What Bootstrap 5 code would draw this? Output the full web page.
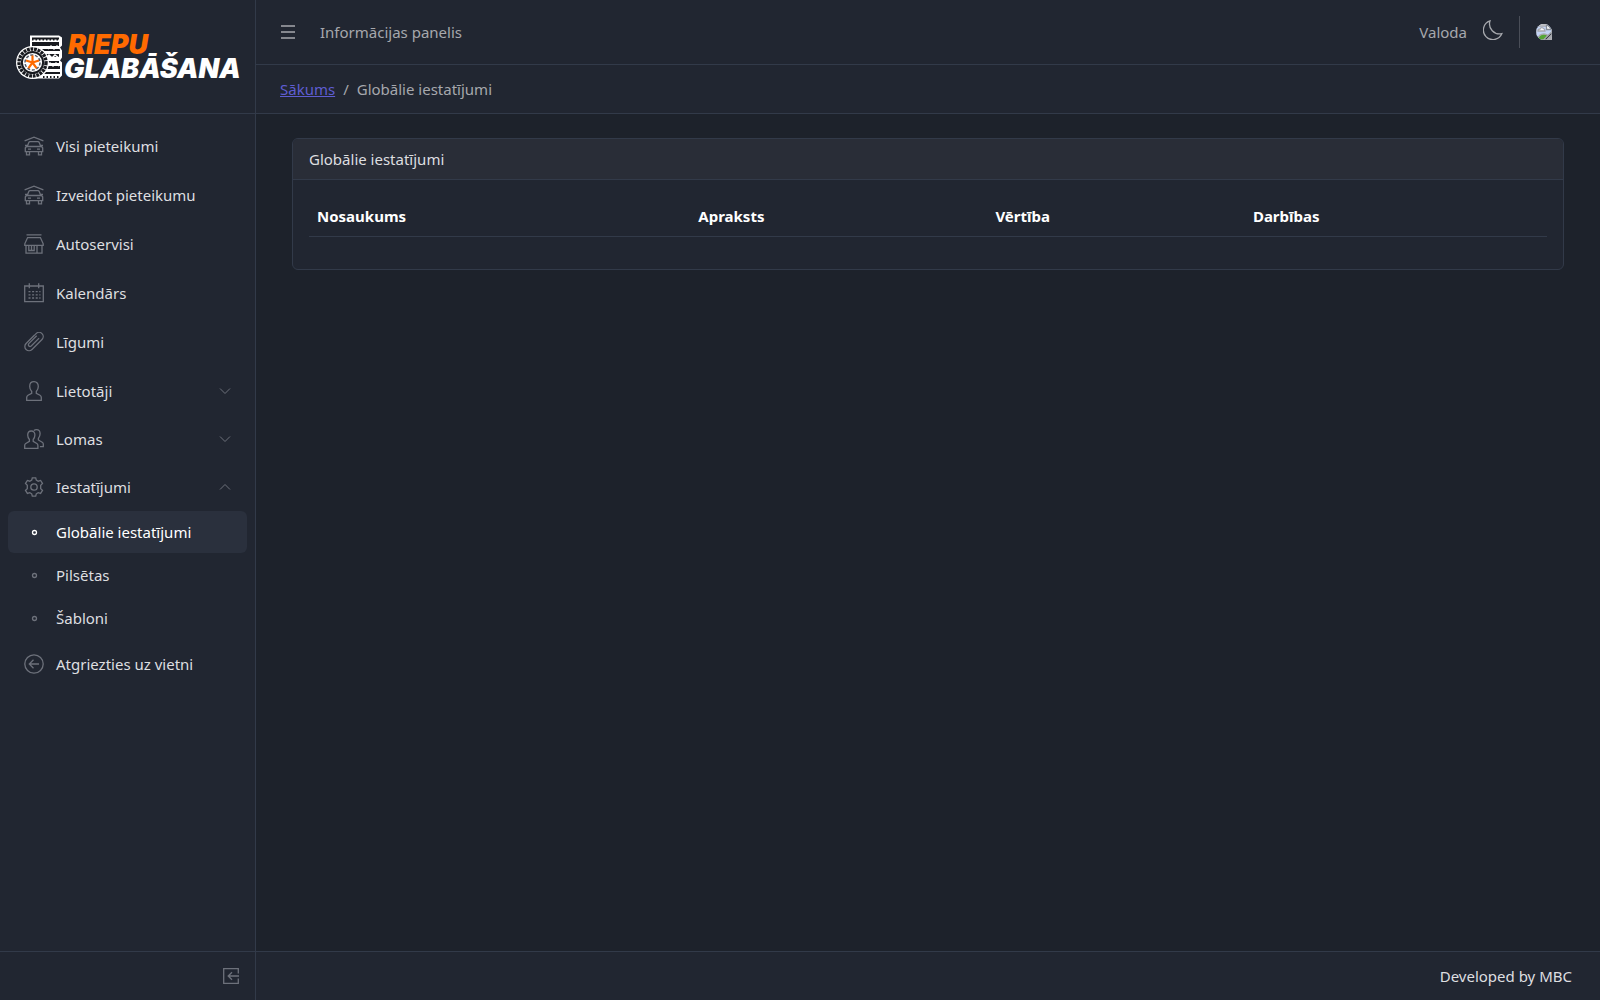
<!DOCTYPE html>
<html lang="lv" data-bs-theme="dark">
<head>
<meta charset="utf-8">
<meta name="viewport" content="width=device-width, initial-scale=1">
<title>Globālie iestatījumi</title>
<link href="https://cdn.jsdelivr.net/npm/bootstrap@5.3.0/dist/css/bootstrap.min.css" rel="stylesheet">
<style>
  :root { --panel: #212631; --line: #323a49; --dim: #6d717b; --soft: #a6a8ad; }
  body { background: #1d222b; color: #dedfe0; font-family: "Noto Sans", "Open Sans", sans-serif; font-size: 15px; line-height: 24px; }
  svg { display: block; fill: none; stroke: currentColor; flex: none; }
  .app-side { width: 256px; flex: none; background: var(--panel); border-right: 1px solid var(--line); }
  .brand { height: 114px; padding: 0 0 0 16px; border-bottom: 1px solid var(--line); color: #fff; }
  .brand-text { font: italic 900 27px/24px Inter, sans-serif; padding: 1px 0 0 2px; }
  .brand-text .top { color: #ff6a00; }
  .side-nav { padding: 8px; }
  .side-nav a, .side-nav button { display: flex; align-items: center; width: 100%; height: 48px; padding: 0 16px; gap: 12px; border: 0; border-radius: 6px; background: none; color: #dedfe0; text-decoration: none; text-align: left; }
  .side-nav svg, .side-foot { color: var(--dim); stroke-width: 1.3; }
  .side-nav > li.flat { margin-bottom: 1px; }
  .side-nav .sub a { height: 42px; margin-bottom: 1px; }
  .side-nav .sub a.active { background: #2a303d; color: #fff; }
  .side-nav .sub a.active svg { color: #fff; }
  .side-foot { height: 49px; padding: 0 16px; border-top: 1px solid var(--line); }
  .top-bar, .crumb-bar { background: var(--panel); border-bottom: 1px solid var(--line); padding: 0 24px; color: var(--soft); }
  .top-bar { height: 65px; }
  .top-bar a, .plain { color: inherit; text-decoration: none; background: none; border: 0; padding: 0; }
  .top-bar svg { stroke-width: 1.3; }
  .crumb-bar { height: 49px; }
  .crumb-bar .breadcrumb { --bs-breadcrumb-divider-color: #a6a8ad; --bs-breadcrumb-item-active-color: #a6a8ad; }
  .crumb-bar a { color: #5f5dd2; }
  .split { width: 1px; height: 32px; background: #4a4e58; }
  .page { padding: 24px 36px; }
  .card { --bs-card-bg: #212631; --bs-card-border-color: #323a49; --bs-card-cap-bg: #292d37; --bs-card-cap-padding-y: 8px; color: #dedfe0; }
  .table { --bs-table-bg: transparent; --bs-table-color: #fff; --bs-table-border-color: #323a49; }
  .app-foot { height: 49px; padding: 0 28px; background: var(--panel); border-top: 1px solid var(--line); }
</style>
<script src="https://cdn.jsdelivr.net/npm/bootstrap@5.3.0/dist/js/bootstrap.bundle.min.js"></script>
</head>
<body>
<svg width="0" height="0" class="position-absolute" aria-hidden="true">
  <symbol id="i-car" viewBox="0 0 20 20"><path d="M.6 4.800 10 1.200l9.400 3.600M3.200 10.500l1.500-3.800Q5.100 5.700 6.100 5.700h7.800q1 0 1.400 1l1.500 3.800M1 9.300h2.400M16.600 9.300H19M1.300 15.700v-3.200q0-2 2-2h13.400q2 0 2 2v3.200zM2.500 15.700v3.200h3v-3.200M14.500 15.700v3.200h3v-3.200M4 13.100h3M13 13.100h3"/></symbol>
  <symbol id="i-shop" viewBox="0 0 20 20"><path d="M2.500 .8h15M3.600 3.600h12.800l2.800 6.200v1.500H.8V9.800zM2 11.300v7.900h16v-7.900M4.800 11.300v5.200h5.400v-5.200M13 19v-7.700M7.500 11.300v5"/></symbol>
  <symbol id="i-cal" viewBox="0 0 20 20"><path d="M.7 3h18.600v15.600H.7zM5.300.2v5M14.700.2v5"/><path stroke-dasharray="2 1.600" d="M4.500 8.600h12M4.500 11.800h12M4.500 15h12"/></symbol>
  <symbol id="i-clip" viewBox="0 0 20 20"><path d="M10.300 3.300 2.100 11.500a4.200 4.200 0 0 0 0 6 4.200 4.200 0 0 0 5.900 0L18 7.500a4.200 4.200 0 0 0 0-5.900 4.200 4.200 0 0 0-5.900 0L5.100 8.600"/><path d="M15.100 6.100 7.200 14a1.700 1.700 0 0 1-2.400-2.400l7.900-7.900"/></symbol>
  <symbol id="i-user" viewBox="0 0 20 20"><path d="M10 .7C7.200.7 5.700 2.700 5.700 5.400c0 2.300.7 3.600 2 5.100v1.800l-3.700 2q-1.300.8-1.300 2.200v2.800h14.600v-2.800q0-1.400-1.300-2.200l-3.700-2v-1.800c1.300-1.500 2-2.800 2-5.100C14.300 2.700 12.800.7 10 .7z"/></symbol>
  <symbol id="i-people" viewBox="0 0 20 20"><path d="M7.300 2C4.900 2 3.700 3.800 3.700 6.100c0 2 .6 3.100 1.700 4.400v1.900l-3.600 2.100q-1.100.7-1.100 1.900v2.900h13.200v-2.900q0-1.200-1.100-1.900l-3.600-2.100v-1.900c1.100-1.300 1.700-2.400 1.700-4.400C10.900 3.800 9.700 2 7.300 2zM9.900 1.600q1.100-.9 2.500-.9c2.400 0 3.700 1.900 3.700 4.100 0 2-.6 3.200-1.700 4.500v1.700l3.800 2.200q1.100.7 1.100 1.900v2.500h-3.400"/></symbol>
  <symbol id="i-gear" viewBox="0 0 20 20"><circle cx="10" cy="10" r="3.200"/><path d="M8.300.8h3.400l.6 2.300 1.900 1.100 2.400-.7 1.900 3-1.800 1.700v3.500l1.800 1.700-1.900 3-2.400-.7-1.900 1.100-.6 2.400H8.300l-.6-2.400-1.900-1.100-2.400.7-1.900-3 1.800-1.700V8.200L1.500 6.500l1.900-3 2.400.7 1.900-1.100z"/></symbol>
  <symbol id="i-back" viewBox="0 0 20 20"><circle cx="10" cy="10" r="9.200"/><path d="M15 10H5.500M9.500 5.800 5.300 10l4.200 4.200"/></symbol>
  <symbol id="i-dot" viewBox="0 0 20 20"><circle cx="10.500" cy="10.500" r="2"/></symbol>
  <symbol id="i-down" viewBox="0 0 12 12"><path stroke-width="1" d="m1 3.500 5 5 5-5"/></symbol>
  <symbol id="i-up" viewBox="0 0 12 12"><path stroke-width="1" d="m1 8.500 5-5 5 5"/></symbol>
</svg>

<div class="d-flex min-vh-100">
  <aside class="app-side d-flex flex-column">
    <a class="brand d-flex align-items-center text-decoration-none" href="#" aria-label="Riepu glabāšana">
      <svg width="46" height="46" viewBox="0 0 46 46" aria-hidden="true">
        <g stroke="none">
          <path fill="#fff" d="M14 1.500h29l3 2v8l-2 2 2 3v7l-2 3 2 2v13l-3 3H14z"/>
          <path fill="#17191e" d="M16 3.500h27v2H16zM16 8h27v4H16zM22 15h22v2H22zM28 20h15v3H28zM30 27h13v2H30zM28 32h16v3H28zM26 38h18v2H26z"/>
        </g>
        <path stroke="#17191e" stroke-width="2" stroke-dasharray="1.500 2" d="M16 5.500h27M27 43h17"/>
        <path stroke="#fff" stroke-width="1.500" d="m32 15 3-3 3 3 3-3 3 3M30 24l3-3 3 3 3-3 4 3M31 32l3-3 3 3 3-3 3 3"/>
        <circle cx="16.500" cy="28.500" r="16.500" fill="#fff" stroke="none"/>
        <circle cx="16.500" cy="28.500" r="13.500" stroke="#17191e" stroke-width="3.400" stroke-dasharray="2.800 .8"/>
        <circle cx="16.500" cy="28.500" r="10.600" stroke="#17191e" stroke-width="2"/>
        <circle cx="16.500" cy="28.500" r="7.500" stroke="#565b66" stroke-width="1.500" stroke-dasharray="3 1.700"/>
        <path stroke="#ff6a00" stroke-width="2.200" d="M16.500 28.500v-7M16.500 28.500l6.500-2M16.500 28.500l4 5.700M16.500 28.500l-4 5.700M16.500 28.500l-6.500-2"/>
      </svg>
      <span class="brand-text"><span class="top d-block ps-1">RIEPU</span><span class="d-block">GLABĀŠANA</span></span>
    </a>
    <ul class="side-nav list-unstyled mb-0 flex-grow-1">
      <li class="flat"><a href="#"><svg width="20" height="20"><use href="#i-car"/></svg>Visi pieteikumi</a></li>
      <li class="flat"><a href="#"><svg width="20" height="20"><use href="#i-car"/></svg>Izveidot pieteikumu</a></li>
      <li class="flat"><a href="#"><svg width="20" height="20"><use href="#i-shop"/></svg>Autoservisi</a></li>
      <li class="flat"><a href="#"><svg width="20" height="20"><use href="#i-cal"/></svg>Kalendārs</a></li>
      <li class="flat"><a href="#"><svg width="20" height="20"><use href="#i-clip"/></svg>Līgumi</a></li>
      <li><button type="button" aria-expanded="false"><svg width="20" height="20"><use href="#i-user"/></svg>Lietotāji<svg class="ms-auto" width="12" height="12"><use href="#i-down"/></svg></button></li>
      <li><button type="button" aria-expanded="false"><svg width="20" height="20"><use href="#i-people"/></svg>Lomas<svg class="ms-auto" width="12" height="12"><use href="#i-down"/></svg></button></li>
      <li>
        <button type="button" aria-expanded="true"><svg width="20" height="20"><use href="#i-gear"/></svg>Iestatījumi<svg class="ms-auto" width="12" height="12"><use href="#i-up"/></svg></button>
        <ul class="sub list-unstyled mb-0">
          <li><a class="active" href="#" aria-current="page"><svg width="20" height="20"><use href="#i-dot"/></svg>Globālie iestatījumi</a></li>
          <li><a href="#"><svg width="20" height="20"><use href="#i-dot"/></svg>Pilsētas</a></li>
          <li><a href="#"><svg width="20" height="20"><use href="#i-dot"/></svg>Šabloni</a></li>
        </ul>
      </li>
      <li><a href="#"><svg width="20" height="20"><use href="#i-back"/></svg>Atgriezties uz vietni</a></li>
    </ul>
    <div class="side-foot d-flex align-items-center justify-content-end">
      <button class="plain text-reset" type="button" aria-label="Sakļaut izvēlni"><svg width="16" height="16" viewBox="0 0 16 16"><path d="M15.300 5.500V.7H.7v14.600h14.600v-4.800M16 8H5.500M9 4.200 5.200 8 9 11.800"/></svg></button>
    </div>
  </aside>

  <div class="d-flex flex-column flex-grow-1">
    <header>
      <div class="top-bar d-flex align-items-center">
        <button class="plain pe-2" type="button" aria-label="Izvēlne"><svg width="16" height="14" viewBox="0 0 16 14"><path d="M1 1h14M1 7h14M1 13h14"/></svg></button>
        <a class="ps-2 ms-1 me-auto" href="#"><span class="ps-1">Informācijas panelis</span></a>
        <div class="d-flex align-items-center gap-3 pe-4">
          <a href="#">Valoda</a>
          <button class="plain pb-1" type="button" aria-label="Tēma"><svg width="20" height="20" viewBox="0 0 20 20"><path d="M7 .9A9.600 9.600 0 1 0 18.900 13.600 10 10 0 0 1 7 .9z"/></svg></button>
          <span class="split"></span>
          <a href="#" aria-label="Profils"><svg width="16" height="16" viewBox="0 0 16 16" stroke="none">
            <clipPath id="round"><path d="M0 8a8 8 0 0 1 8-8q4 0 6 3l2 3v10H8a8 8 0 0 1-8-8z"/></clipPath>
            <g clip-path="url(#round)"><path fill="#c3d3f5" d="M0 0h16v16H0z"/><path fill="#f4f6fa" d="M0 0h11v2H0zM2 7q0-2 2-2 1-2 3-1t2 3z"/><path fill="#fff" stroke="#858b95" d="M10.500 0v5.500H16z"/><path fill="#54a535" d="M1 16q2-6 7-6 4 0 7 6z"/><path fill="#212631" d="M16 7.500v3L10.500 16H7.500z"/><path fill="#eceff2" d="M16 11v5h-5z"/><path fill="#54a535" d="M15 13v2h-2z"/></g></svg></a>
        </div>
      </div>
      <nav class="crumb-bar d-flex align-items-center" aria-label="breadcrumb">
        <ol class="breadcrumb mb-0">
          <li class="breadcrumb-item"><a href="#">Sākums</a></li>
          <li class="breadcrumb-item active" aria-current="page">Globālie iestatījumi</li>
        </ol>
      </nav>
    </header>
    <main class="page flex-grow-1">
      <div class="card">
        <div class="card-header">Globālie iestatījumi</div>
        <div class="card-body">
          <table class="table mb-3">
            <colgroup><col style="width:30.800%"><col style="width:24%"><col style="width:20.800%"><col></colgroup>
            <thead><tr><th scope="col">Nosaukums</th><th scope="col">Apraksts</th><th scope="col">Vērtība</th><th scope="col">Darbības</th></tr></thead>
            <tbody></tbody>
          </table>
        </div>
      </div>
    </main>
    <footer class="app-foot d-flex align-items-center justify-content-end">Developed by MBC</footer>
  </div>
</div>
</body>
</html>
